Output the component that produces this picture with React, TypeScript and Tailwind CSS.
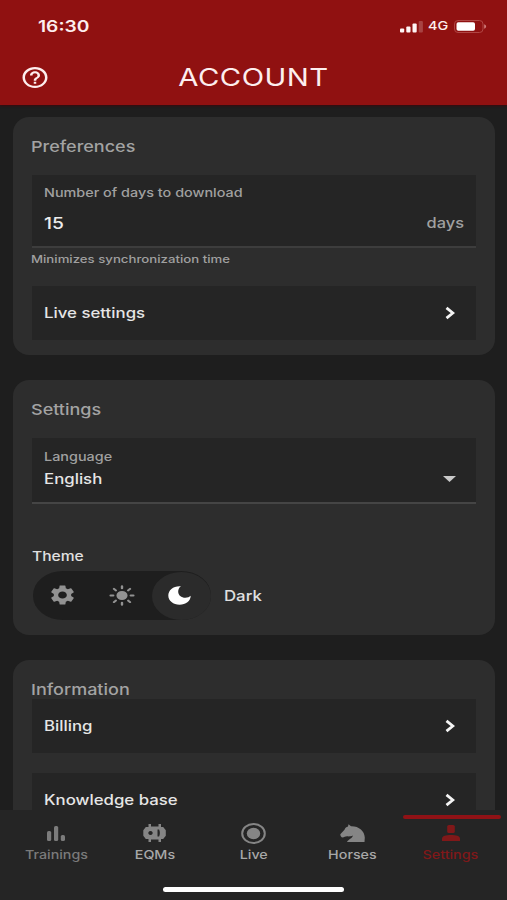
import type { ReactNode } from "react";
import { MdHelpOutline, MdSettings } from "react-icons/md";
import { IoSunny } from "react-icons/io5";

// Wide-set label; the font is widened horizontally from its left edge.
function Label({ children, className = "" }: { children: ReactNode; className?: string }) {
  return (
    <span className={`block w-max origin-left scale-x-[1.2] whitespace-nowrap ${className}`}>{children}</span>
  );
}

function Chevron() {
  return (
    <svg className="h-[14px] w-[12px]" viewBox="0 0 12 14" fill="none" stroke="#f4f4f4" strokeWidth="2.8">
      <path d="M2.5 1.8 8.8 7 2.5 12.2" />
    </svg>
  );
}

function LinkRow({ title }: { title: string }) {
  return (
    <div className="flex h-[54px] shrink-0 items-center justify-between bg-[#252525] pr-[20px] pb-px pl-[12px]">
      <Label className="text-[14px] font-medium text-[#e6e6e6]">{title}</Label>
      <Chevron />
    </div>
  );
}

function Card({ title, className, children }: { title: string; className: string; children: ReactNode }) {
  return (
    <section className={`flex shrink-0 flex-col rounded-[16px] bg-[#2d2d2d] px-[19px] pt-[20px] ${className}`}>
      <h2 className="-ml-px h-5 leading-5">
        <Label className="text-[15px] font-medium text-[#a3a3a3]">{title}</Label>
      </h2>
      {children}
    </section>
  );
}

function Tab({ label, color, children }: { label: string; color: string; children: ReactNode }) {
  return (
    <div className="flex flex-1 flex-col items-center pt-[12px]">
      <div className="flex h-[22px] items-center">{children}</div>
      <span className={`mt-[2px] scale-x-[1.19] text-[12px] leading-[17px] font-medium ${color}`}>{label}</span>
    </div>
  );
}

export default function App() {
  return (
    <div className="flex h-[900px] w-[507px] flex-col overflow-hidden bg-[#1e1e1e] font-['Inter',sans-serif]">
      <header className="h-[105px] shrink-0 bg-[#901111] text-[#fdeeee] shadow-[0_1px_2px_#3a0a0e]">
        <div className="flex h-[52px] items-center justify-between pr-[20px] pl-[38px]">
          <Label className="text-[16px] font-semibold">16:30</Label>
          <div className="flex items-center">
            <svg className="mt-px h-[12px] w-[23px]" viewBox="0 0 23 12" fill="#fff5f5">
              <rect x="0" y="7.5" width="4.2" height="4" rx="1" />
              <rect x="6.3" y="5.5" width="4.2" height="6" rx="1" />
              <rect x="12.5" y="2.5" width="4.2" height="9" rx="1" />
              <rect x="18.7" y="0" width="4.2" height="11.5" rx="1" opacity=".22" />
            </svg>
            <Label className="ml-[5px] text-[12px] font-medium">4G</Label>
            <svg className="ml-[9px] h-[13px] w-[33px]" viewBox="0 0 33 13">
              <rect x=".5" y=".5" width="28.5" height="12" rx="3.5" fill="none" stroke="#b04644" />
              <rect x="2.5" y="2.2" width="18.5" height="8.6" rx="1.8" fill="#fff" />
              <path d="M30.2 4.3c2.6.8 2.6 3.6 0 4.4z" fill="#cf7a78" />
            </svg>
          </div>
        </div>
        <div className="grid h-[50px] grid-cols-[60px_1fr_60px] items-center">
          <MdHelpOutline preserveAspectRatio="none" className="ml-[19.5px] h-[25px] w-[30px]" />
          <h1 className="mt-[2px] scale-x-[1.22] text-center text-[24px] leading-8 font-normal tracking-[0.4px]">
            ACCOUNT
          </h1>
        </div>
      </header>

      <main className="flex min-h-0 flex-1 flex-col gap-[25px] overflow-hidden pt-[12px] pr-[12px] pl-[13px]">
        <Card title="Preferences" className="h-[238px]">
          <div className="mt-[18px] flex h-[73px] flex-col border-b-2 border-[#3d3d3d] bg-[#252525] px-[12px] pt-[10px]">
            <Label className="text-[12px] leading-4 font-medium text-[#a0a0a0]">Number of days to download</Label>
            <div className="mt-[12px] flex items-center justify-between">
              <Label className="text-[16px] leading-5 font-medium text-[#ececec]">15</Label>
              <span className="origin-right scale-x-[1.17] text-[14px] leading-5 font-medium text-[#a0a0a0]">days</span>
            </div>
          </div>
          <Label className="mt-[3px] -ml-px text-[11px] leading-4 font-medium text-[#a0a0a0]">
            Minimizes synchronization time
          </Label>
          <div className="h-[19px]" />
          <LinkRow title="Live settings" />
        </Card>

        <Card title="Settings" className="h-[255px]">
          <div className="mt-[18px] flex h-[66px] items-end justify-between border-b-2 border-[#454545] bg-[#252525] pr-[20px] pb-[12px] pl-[12px]">
            <div>
              <Label className="text-[12px] leading-[22px] font-medium text-[#a0a0a0]">Language</Label>
              <Label className="text-[14px] leading-[22px] font-medium text-[#e6e6e6]">English</Label>
            </div>
            <svg className="mb-[8px] h-[6px] w-[13px]" viewBox="0 0 13 6" fill="#c9c9c9">
              <path d="M0 0h13L6.5 6z" />
            </svg>
          </div>
          <Label className="mt-[42px] text-[13px] leading-5 font-medium text-[#e0e0e0]">Theme</Label>
          <div className="mt-[5px] flex items-center">
            <div className="ml-px grid h-[49px] w-[178px] grid-cols-3 items-center justify-items-center rounded-[30px/24px] bg-[#1e1e1e] text-[#929292]">
              <MdSettings preserveAspectRatio="none" className="-mt-px h-[24px] w-[29px]" />
              <IoSunny preserveAspectRatio="none" className="-mt-px h-[23px] w-[28px]" />
              <div className="flex h-[48px] w-[59px] items-center justify-center rounded-[50%] bg-[#2b2b2b] text-white">
                <svg className="mr-[3px] -mt-px h-[19px] w-[23px]" viewBox="0 0 23 19" fill="currentColor">
                  <path d="M11.5.2C5 .2.3 4.200.3 9.600c0 5.200 5 9.200 11.300 9.200 6.100 0 11-3.700 11.100-9-1.200 1.300-3.200 2-5.300 2-4.100 0-7.200-2.600-7.200-6 0-2.200.7-4.200 2.800-5.500z" />
                </svg>
              </div>
            </div>
            <Label className="-mt-px ml-[13px] text-[14px] font-medium text-[#e0e0e0]">Dark</Label>
          </div>
        </Card>

        <Card title="Information" className="h-[240px]">
          <div className="-mt-px flex flex-col gap-[20px]">
            <LinkRow title="Billing" />
            <LinkRow title="Knowledge base" />
          </div>
        </Card>
      </main>

      <footer className="relative h-[90px] shrink-0 bg-[#252525]">
        <div className="absolute top-[5px] left-[403px] h-[4px] w-[98px] rounded-full bg-[#901216]" />
        <nav className="flex h-[77px] px-[7px]">
          <Tab label="Trainings" color="text-[#7a7a7a]">
            <svg className="h-[15px] w-[18px]" viewBox="0 0 18 15" fill="#7c7c7c">
              <rect x="0" y="5" width="4.2" height="10" rx="1.6" />
              <rect x="7" y="0" width="4.2" height="15" rx="1.6" />
              <rect x="13.8" y="9" width="4.2" height="6" rx="1.6" />
            </svg>
          </Tab>
          <Tab label="EQMs" color="text-[#a8a8a8]">
            <svg className="h-[18px] w-[23px]" viewBox="0 0 23 18" fill="#858585">
              <path
                fillRule="evenodd"
                d="M5.5 0H8v2.500h7.500V0H18v3h2.200L22.800 6.200v5.600L20.200 15H18v3h-2.500v-2.500H8V18H5.500v-3H2.800L.3 11.800V6.200L2.800 3h2.700zM7.500 7a2.200 2 0 1 0 .01 0zM14.500 5.500v7h1.600c1-2.200 1-4.800 0-7z"
              />
            </svg>
          </Tab>
          <Tab label="Live" color="text-[#a8a8a8]">
            <svg className="h-[21px] w-[25px]" viewBox="0 0 25 21">
              <ellipse cx="12.5" cy="10.5" rx="11.3" ry="9.4" fill="none" stroke="#858585" strokeWidth="2" />
              <ellipse cx="12.5" cy="10.5" rx="6.7" ry="5.7" fill="#858585" />
            </svg>
          </Tab>
          <Tab label="Horses" color="text-[#a8a8a8]">
            <svg className="h-[19px] w-[25px]" viewBox="0 0 25 19" fill="#858585">
              <path d="M8.500.3 11 2.200C19 2 24.500 7 24.800 13.500L24.500 18H7c1.500-3 5-3.200 6-6.500-2.300 1-4 1-6 .8-1.800 0-2.800 1.200-4.500 1.200C1.500 13.500.2 12 .3 10.300L4.500 5.800C5 4 6.500 3 8 2.600z" />
            </svg>
          </Tab>
          <Tab label="Settings" color="text-[#801819]">
            <svg className="h-[16px] w-[18px]" viewBox="0 0 18 16" fill="#801819">
              <rect x="5.2" y="0" width="7.600" height="8" rx="1.600" />
              <path d="M0 16v-2.500C0 11 4 10 9 10s9 1 9 3.500V16z" />
            </svg>
          </Tab>
        </nav>
        <div className="mx-auto h-[5px] w-[181px] rounded-full bg-white" />
      </footer>
    </div>
  );
}
